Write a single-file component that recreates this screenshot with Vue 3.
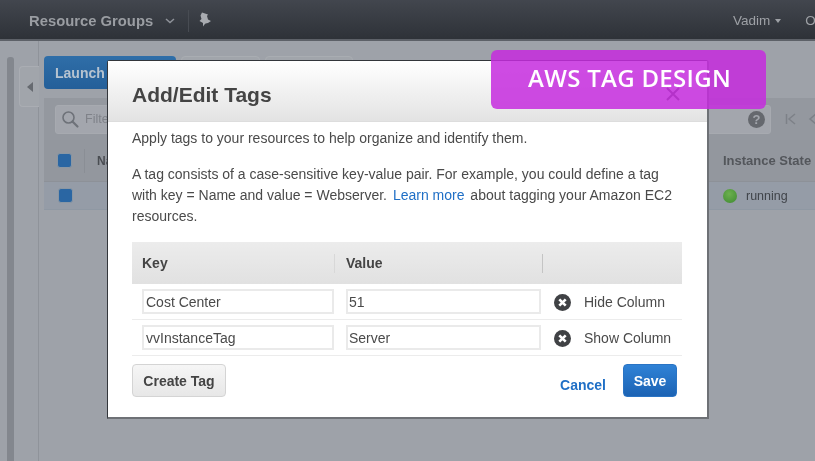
<script setup>
const rows = [
  { key: 'Cost Center', value: '51', action: 'Hide Column' },
  { key: 'vvInstanceTag', value: 'Server', action: 'Show Column' }
]
</script>

<template>
  <div class="page">
    <header class="topbar">
      <div class="tb-left">
        <span class="rg">Resource Groups</span>
        <svg class="chev" width="10" height="6" viewBox="0 0 10 6"><path d="M1 1l4 3.500L9 1" fill="none" stroke="#8f939a" stroke-width="1.500"/></svg>
        <span class="tb-sep"></span>
        <svg class="pin" width="14" height="15" viewBox="0 0 14 15"><path d="M4 0.500l6 2-1 1.500 1 3.500 3 1.500-3 2-2.500 0.500-1 1-1.500 2 0-3.500-3.500-2 2-2-1-3.500z" fill="#a8abb0"/></svg>
      </div>
      <div class="tb-right">
        <span class="user">Vadim</span>
        <span class="caret"></span>
        <span class="tb-sep2"></span>
        <span class="user">O</span>
      </div>
    </header>

    <div class="workspace">
      <div class="rail"><div class="rail-bar"></div></div>
      <div class="side-col">
        <div class="side-tab"><span class="tri"></span></div>
      </div>
      <main class="content">
        <div class="actions">
          <button class="launch">Launch Instance</button>
          <button class="ghost g1"></button>
          <button class="ghost g2"></button>
        </div>
        <div class="filterbar">
          <div class="search">
            <svg width="19" height="19" viewBox="0 0 19 19"><circle cx="7.500" cy="7.500" r="5.500" fill="none" stroke="#6e7279" stroke-width="1.600"/><path d="M11.500 11.500l5 5" stroke="#6e7279" stroke-width="2.200" stroke-linecap="round"/></svg>
            <span class="ph">Filter by tags and attributes</span>
            <span class="help">?</span>
          </div>
          <div class="pager">
            <svg width="14" height="14" viewBox="0 0 14 14"><path d="M2.500 2v10M11 2L5 7l6 5" fill="none" stroke="#7d8188" stroke-width="1.500"/></svg>
            <svg width="10" height="14" viewBox="0 0 10 14"><path d="M9 2L3 7l6 5" fill="none" stroke="#7d8188" stroke-width="1.500"/></svg>
          </div>
        </div>
        <div class="thead">
          <span class="check"></span>
          <span class="th-sep"></span>
          <span class="th-name">Name</span>
          <span class="th-sep th-sep2"></span>
          <span class="th-state">Instance State</span>
        </div>
        <div class="trow">
          <span class="check check-row"></span>
          <span class="dot"></span>
          <span class="state">running</span>
        </div>
      </main>
    </div>

    <section class="modal">
      <div class="m-head">
        <h2>Add/Edit Tags</h2>
        <svg class="close" width="16" height="16" viewBox="0 0 16 16"><path d="M2 2l12 12M14 2L2 14" stroke="#555" stroke-width="2"/></svg>
      </div>
      <div class="m-body">
        <p class="p1">Apply tags to your resources to help organize and identify them.</p>
        <p class="p2">A tag consists of a case-sensitive key-value pair. For example, you could define a tag<br>with key = Name and value = Webserver. <a>Learn more</a> about tagging your Amazon EC2<br>resources.</p>
        <div class="t-head">
          <span class="c-key">Key</span>
          <span class="c-val">Value</span>
          <span class="c-end"></span>
        </div>
        <div v-for="r in rows" :key="r.key" class="t-row">
          <span class="inp i-key">{{ r.key }}</span>
          <span class="inp i-val">{{ r.value }}</span>
          <svg class="rm" width="17" height="17" viewBox="0 0 17 17"><circle cx="8.500" cy="8.500" r="8.500" fill="#404245"/><path d="M5.300 5.300l6.400 6.400M11.700 5.300l-6.400 6.400" stroke="#fff" stroke-width="2.600"/></svg>
          <span class="act">{{ r.action }}</span>
        </div>
        <div class="m-foot">
          <button class="create">Create Tag</button>
          <a class="cancel">Cancel</a>
          <button class="save">Save</button>
        </div>
      </div>
    </section>

    <div class="badge">AWS TAG DESIGN</div>
  </div>
</template>

<style>
html, body { margin: 0; background: #9ea2a9; overflow: hidden; }
</style>

<style scoped>
.page {
  position: relative;
  width: 815px;
  height: 461px;
  overflow: hidden;
  background: #9ea2a9;
  font-family: "Liberation Sans", Arial, sans-serif;
  color: #444;
  filter: blur(0.6px);
}
.topbar {
  height: 39px;
  border-bottom: 2px solid #5d6168;
  background: linear-gradient(#42464e, #2e3238);
  display: flex;
  justify-content: space-between;
  align-items: center;
  box-sizing: content-box;
}
.tb-left { display: flex; align-items: center; padding-left: 29px; margin-top: 2px; }
.rg { font-size: 14.800px; font-weight: 700; color: #9a9da2; }
.chev { margin-left: 12px; }
.tb-sep { width: 1px; height: 22px; background: #484c53; margin: 0 9px 0 13px; }
.pin { margin-top: -2px; }
.tb-right { display: flex; align-items: center; width: 82px; flex: none; margin-top: 2px; }
.user { font-size: 13.500px; color: #9ea1a6; }
.caret { width: 0; height: 0; border: 3.500px solid transparent; border-top: 4px solid #9ea1a6; border-bottom: 0; margin-left: 5px; }
.tb-sep2 { width: 1px; height: 22px; background: #484c53; margin: 0 9px 0 15px; }
.workspace { display: flex; height: 420px; }
.rail { flex: none; border-right: 1px solid #8f939a; box-sizing: content-box; padding-left: 7px; width: 31px; position: relative; }
.rail-bar { width: 7px; height: 420px; margin-top: 16px; background: #83878e; border-radius: 3px 3px 0 0; }
.side-col { width: 0; position: relative; }
.side-tab {
  position: absolute; left: -20px; top: 25px; width: 19px; height: 39px;
  border: 1px solid #aaadb3; border-right: 0; border-radius: 4px 0 0 4px; background: #a1a5ab;
  display: flex; align-items: center; justify-content: center;
}
.tri { width: 0; height: 0; border: 5px solid transparent; border-right: 6px solid #666a70; border-left: 0; }
.content { margin-left: 5px; flex: 1; min-width: 0; padding-top: 15px; }
.actions { display: flex; gap: 5px; height: 33px; }
.actions button { font-family: inherit; padding: 0; box-sizing: border-box; }
.launch {
  width: 132px; height: 33px; border: 0; border-radius: 4px; text-align: left; padding-left: 11px !important;
  background: linear-gradient(#2f6ea8, #245f99); color: #b6c3d0; font-size: 14px; font-weight: 700;
}
.ghost { height: 33px; border: 1px solid #a9adb2; border-radius: 4px; background: #a1a5ab; }
.g1 { width: 79px; }
.g2 { width: 88px; }
.filterbar {
  margin-top: 9px; height: 42px; background: #94989f; display: flex; align-items: center; padding-left: 11px; box-sizing: border-box;
}
.search {
  width: 716px; height: 29px; flex: none; background: #a3a6ad; border: 1px solid #a7aab0; border-radius: 3px; box-sizing: border-box;
  display: flex; align-items: center; padding-left: 5px; position: relative;
}
.ph { font-size: 12.500px; color: #7f8289; margin-left: 5px; }
.help {
  position: absolute; right: 5px; top: 5px; width: 17px; height: 17px; border-radius: 50%; background: #65686e; color: #a3a6ad;
  font-size: 13px; font-weight: 700; text-align: center; line-height: 17px;
}
.pager { display: flex; gap: 9px; margin-left: 13px; flex: none; }
.thead {
  height: 42px; background: #93979e; display: flex; align-items: center; padding-left: 13px; position: relative;
  border-bottom: 1px solid #8d9198; box-sizing: border-box;
}
.check { width: 13px; height: 13px; background: #2a66a3; border-radius: 3px; border: 1px solid #8a97a4; flex: none; }
.th-sep { width: 1px; height: 24px; background: #8a8e95; margin-left: 12px; }
.th-name { font-size: 12px; font-weight: 700; color: #4a4d52; margin-left: 12px; }
.th-sep2 { position: absolute; left: 662px; margin: 0; }
.th-state { position: absolute; left: 679px; font-size: 13px; font-weight: 700; color: #53565b; white-space: nowrap; }
.trow { height: 28px; background: #959ca7; display: flex; align-items: center; padding-left: 14px; position: relative; border-bottom: 1px solid #8f98a3; box-sizing: border-box; }
.dot {
  position: absolute; left: 679px; top: 7px; width: 14px; height: 14px; border-radius: 50%;
  background: radial-gradient(circle at 45% 35%, #6cb04e, #3f8a32);
}
.state { position: absolute; left: 702px; font-size: 12.500px; color: #40444a; }

.modal {
  position: absolute; left: 107px; top: 60px; width: 602px; height: 359px; box-sizing: border-box;
  background: #fff; border: 1px solid #33363b; border-right: 2px solid #6e7176; border-bottom: 2px solid #6e7176; border-radius: 3px 3px 0 0;
}
.m-head {
  height: 61px; box-sizing: border-box; background: linear-gradient(#fff, #e3e3e3); border-bottom: 1px solid #ddd;
  padding: 20px 24px 0; position: relative;
}
h2 { margin: 0; font-size: 21px; line-height: 27px; font-weight: 700; color: #444; }
.close { position: absolute; left: 557px; top: 25px; }
.m-body { padding: 0 25px 0 24px; font-size: 14px; color: #4a4a4a; }
.p1 { margin: 7px 0 0; line-height: 18px; white-space: nowrap; }
.p2 { margin: 17px 0 0; line-height: 21px; white-space: nowrap; }
.p2 a { color: #1f6fc6; margin: 0 2px; }
.t-head {
  margin-top: 15px; width: 550px; height: 42px; background: linear-gradient(#ececec, #e1e1e1);
  display: flex; align-items: center; font-weight: 700; font-size: 14px; color: #444;
}
.c-key { width: 203px; padding-left: 10px; box-sizing: border-box; border-right: 1px solid #d8d8d8; line-height: 19px; }
.c-val { width: 208px; padding-left: 11px; box-sizing: border-box; border-right: 1px solid #c4c4c4; line-height: 19px; }
.t-row {
  width: 550px; height: 36px; border-bottom: 1px solid #ececec; box-sizing: border-box;
  display: flex; align-items: center; padding: 0 0 1px 10px;
}
.inp {
  height: 25px; box-sizing: border-box; border: 2px solid #eaeaea; padding: 0 2px; line-height: 22px; background: #fff; font-size: 14px; color: #4a4a4a; white-space: nowrap;
}
.i-key { width: 192px; }
.i-val { width: 195px; margin-left: 12px; padding-left: 1px; }
.rm { margin-left: 13px; flex: none; margin-top: 3px; }
.act { margin-left: 13px; white-space: nowrap; font-size: 14px; margin-top: 1px; }
.m-foot { display: flex; align-items: center; width: 545px; margin-top: 8px; }
.m-foot button { font-family: inherit; padding: 0; cursor: pointer; box-sizing: border-box; }
.create {
  width: 94px; height: 33px; border: 1px solid #d4d4d4; border-radius: 4px; background: linear-gradient(#f6f6f6, #e7e7e7);
  font-size: 14px; font-weight: 700; color: #444;
}
.cancel { margin-left: auto; margin-top: 9px; color: #1f6fc6; font-size: 14px; font-weight: 700; }
.save {
  width: 54px; height: 33px; margin-left: 17px; border: 1px solid #2a74c4; border-radius: 4px;
  background: linear-gradient(#2f82d6, #1c63b4); color: #fff; font-size: 14px; font-weight: 700;
}
.badge {
  position: absolute; left: 491px; top: 50px; width: 275px; height: 59px; border-radius: 6px;
  background: rgba(198, 44, 222, 0.85); color: #fff; font-family: "Open Sans", sans-serif; font-weight: 600; font-size: 24px;
  display: flex; align-items: center; justify-content: center; padding: 0 0 4px 2px; box-sizing: border-box; letter-spacing: 0.3px;
}
</style>
